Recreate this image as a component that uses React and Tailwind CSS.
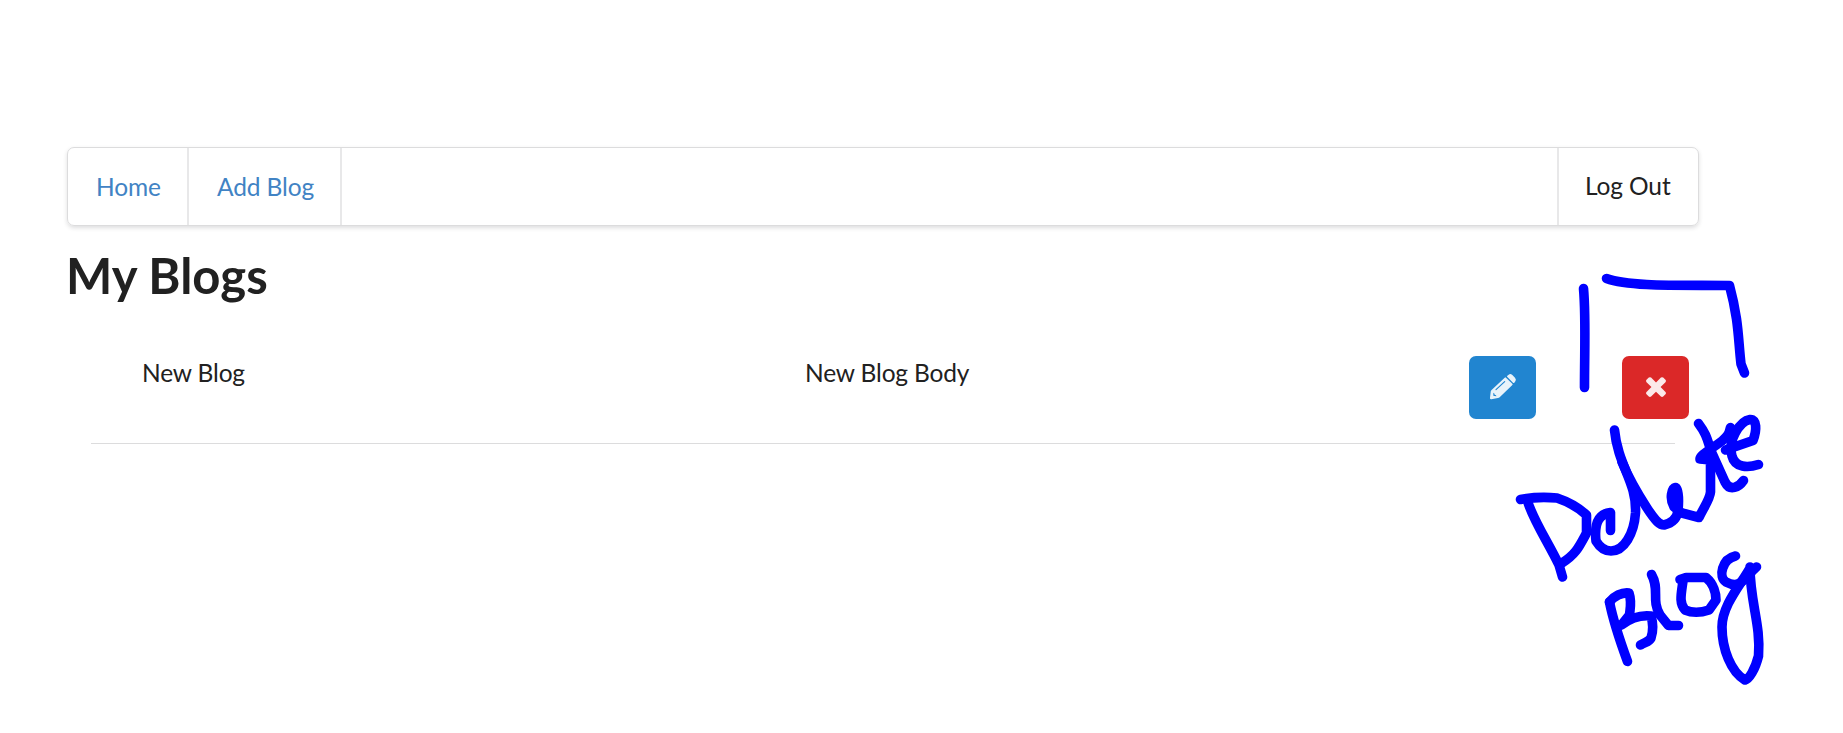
function PencilIcon() {
  return (
    <svg viewBox="0 0 126 126" className="-mt-[1px] ml-px h-[42px] w-[42px] shrink-0" fill="#e9f3fa">
      <path d="M68 35Q70 33 72 35L91 53Q93 55 91 57L53 94Q51 96 48 96L28 100Q23 100 24 95L26 78Q26 75 28 73Z" />
      <path d="M76 29L80 26Q85 22 91 27L99 35Q104 41 100 46L97 50Q95 52 93 50L76 33Q74 31 76 29Z" />
      <path d="M42 71L68 47" fill="none" stroke="#2185d0" strokeWidth="3.5" strokeLinecap="round" />
      <path d="M34 80L34 89L43 91Q44 86 38 86Q38 81 34 80Z" fill="#2185d0" />
    </svg>
  );
}

function TimesIcon() {
  return (
    <svg viewBox="0 0 1792 1792" fill="currentColor" className="-mt-[3px] h-[30px] w-[30px]">
      <path d="M1490 1322q0 40-28 68l-136 136q-28 28-68 28t-68-28l-294-294-294 294q-28 28-68 28t-68-28l-136-136q-28-28-28-68t28-68l294-294-294-294q-28-28-28-68t28-68l136-136q28-28 68-28t68 28l294 294 294-294q28-28 68-28t68 28l136 136q28 28 28 68t-28 68l-294 294 294 294q28 28 28 68z" />
    </svg>
  );
}

const strokes = [
  "M1583.5 288.5C1586 316 1584.5 350 1584.5 387.5",
  "M1606.5 278.5C1630 287 1682 285 1729.5 285.5C1739 321 1738 338 1741 364L1744.5 373",
  "M1614.5 430C1618 466 1637 482 1635.5 513C1634 534 1624 551 1611 551C1604 551 1599 546 1596 541C1594 523 1599 514 1610.5 512.5L1610.5 530.5",
  "M1520.5 499.5C1534 497 1546 497 1557 498C1572 503 1579 508 1586.5 515L1586.5 533C1579 547 1576 554 1562 563",
  "M1527.5 501C1533 520 1548 542 1559 565L1562.5 577",
  "M1622 462C1630 481 1638 494 1647 508C1656 522 1660 525 1664 525C1672 523 1677 518 1678 511",
  "M1678 511C1679 500 1679 488 1675.5 487.5C1672 488 1669 498 1674 507L1682 513L1699 517.5C1704 507 1710 499 1710.5 492L1710.5 460L1700 459C1700 455 1710 450 1722 441C1730 434 1729 432 1730.5 427.5",
  "M1675.5 488L1675.5 506",
  "M1698.5 423.5C1707 435 1707 439 1711 451L1725 482C1730 492 1739 487 1743.5 480.5",
  "M1725.5 450L1753 440.5C1757 430 1757 419 1750 419.5C1740 421 1727 441 1732 456C1735 468 1748 468 1758.5 464.5",
  "M1609.5 602C1613 620 1620 641 1627.5 661.5",
  "M1609.5 602C1614 596 1622 592 1629 593C1632 602 1630 609 1629.5 615L1621.5 625C1632 617 1642 615 1651 616C1654 626 1653 632 1651 638C1649 642 1645 642 1640.5 645",
  "M1651.5 574.5C1660 589 1651 600 1660 615L1668.5 625.5L1678.5 625.5",
  "M1680 579.5L1686 577.5L1706 577.5C1714 584 1716 594 1716 600L1709 610C1700 613 1692 613 1685 610C1679 603 1681 595 1683 581",
  "M1735.5 556C1722 559 1718 577 1726 582C1741 590 1745 577 1756.5 567",
  "M1750 567C1750 602 1761 625 1758.5 656C1755 670 1749 679 1745 680C1731 672 1722 649 1722 627C1722 605 1742 583 1750 568",
];

function Annotation() {
  return (
    <svg
      viewBox="0 0 1843 733"
      className="pointer-events-none absolute inset-0 h-[733px] w-[1843px]"
      fill="none"
      stroke="#0000ff"
      strokeWidth="9.6"
      strokeLinecap="round"
      strokeLinejoin="round"
    >
      {strokes.map((d) => (
        <path key={d} d={d} />
      ))}
    </svg>
  );
}

export default function App() {
  return (
    <div className="relative h-[733px] w-[1843px] overflow-hidden bg-white pt-[147px] pl-[67px] font-['Lato',sans-serif] text-[#212121]">
      <nav className="flex h-[79px] w-[1632px] rounded-[7px] border border-[#dcdcdd] text-[24.5px] leading-[30px] tracking-[-0.12px] shadow-[0_2px_4px_0_rgba(34,36,38,0.15)]">
        <a className="flex w-[121px] items-center border-r-2 border-[#e8e8e9] pl-[28px] text-[#4183c4]">Home</a>
        <a className="flex w-[153px] items-center border-r-2 border-[#e8e8e9] pl-[28px] text-[#4183c4]">Add Blog</a>
        <a className="ml-auto flex w-[141px] items-center border-l-2 border-[#e8e8e9] pb-[2px] pl-[26px]">Log Out</a>
      </nav>
      <h1 className="-ml-px mt-[18px] mb-[1px] text-[49px] leading-[63px] font-bold">My Blogs</h1>
      <main className="ml-[24px] flex h-[136px] w-[1584px] border-b border-[#dcdcdd] text-[24.5px] leading-[35px] tracking-[-0.15px]">
        <p className="mt-[47px] ml-[51px] w-[663px] shrink-0">New Blog</p>
        <p className="mt-[47px] w-[664px] shrink-0">New Blog Body</p>
        <button className="mt-[48px] flex h-[63px] w-[67px] shrink-0 items-center justify-center rounded-[7px] bg-[#2185d0]">
          <PencilIcon />
        </button>
        <button className="mt-[48px] ml-[86px] flex h-[63px] w-[67px] shrink-0 items-center justify-center rounded-[7px] bg-[#db2828] text-[#fbe9e9]">
          <TimesIcon />
        </button>
      </main>
      <Annotation />
    </div>
  );
}
